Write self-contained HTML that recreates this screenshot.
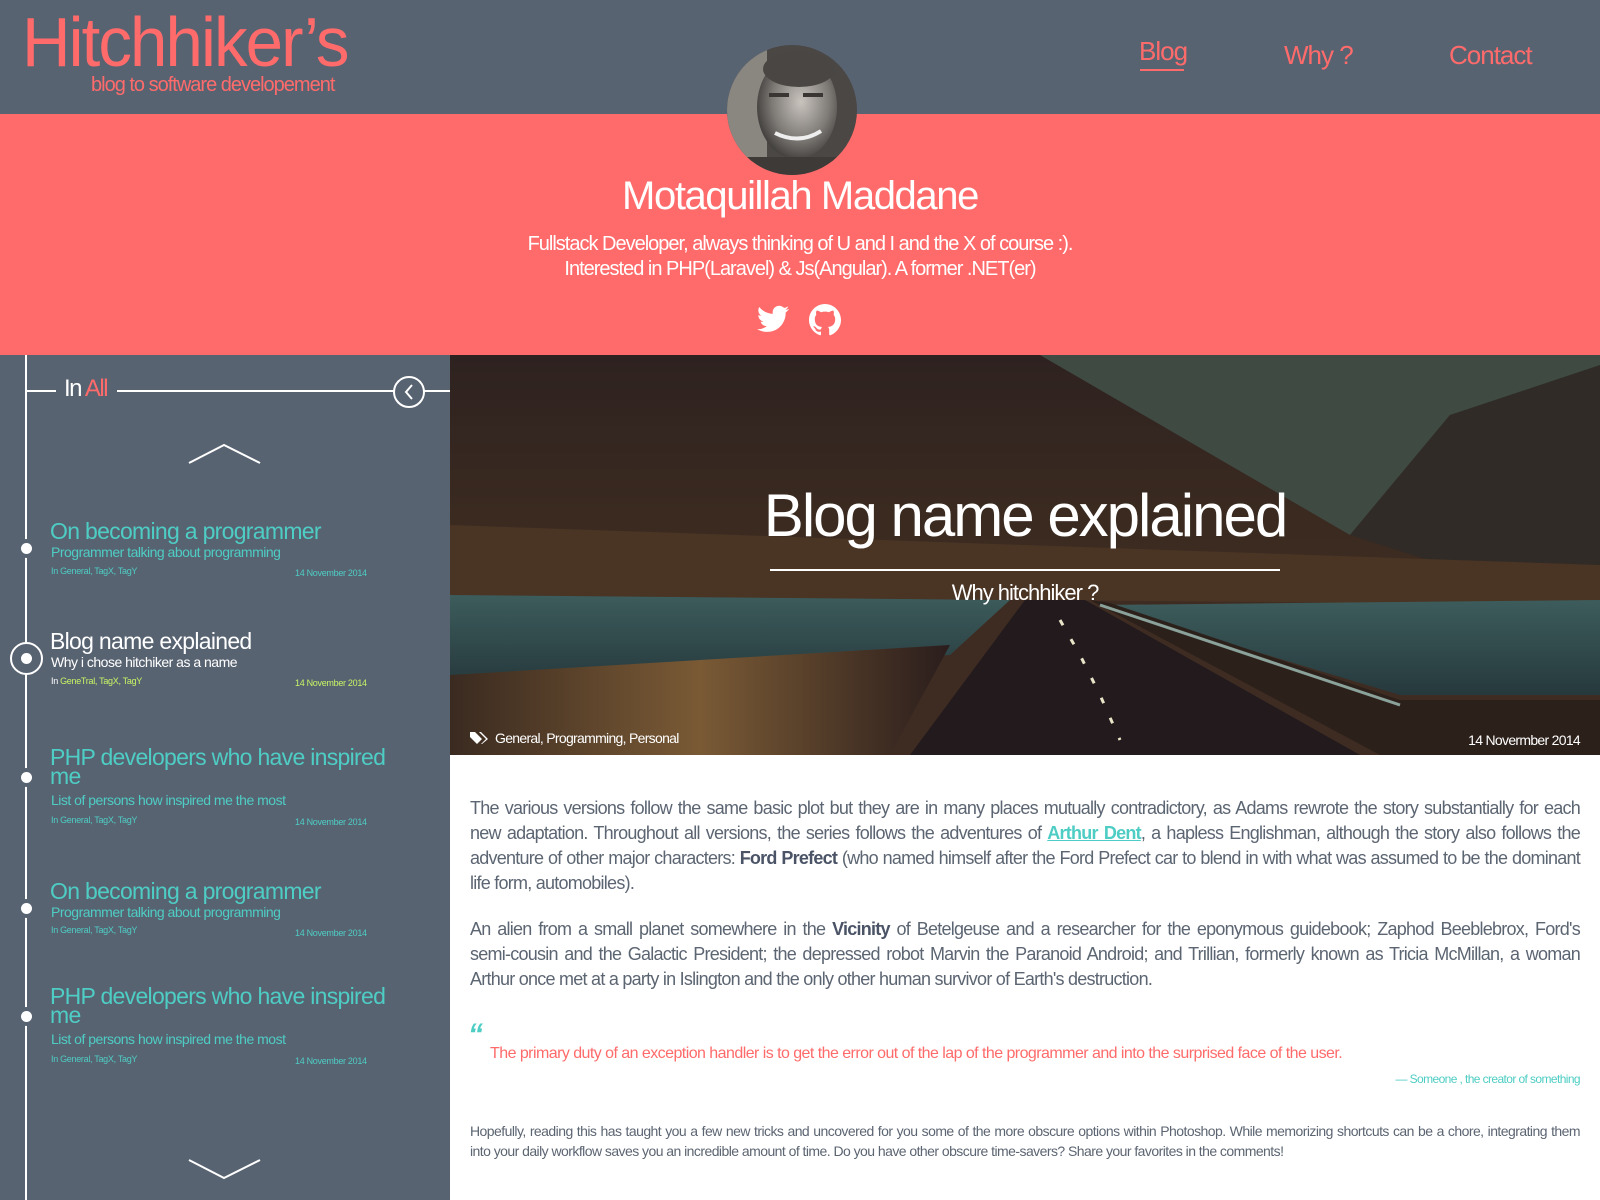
<!DOCTYPE html>
<html><head><meta charset="utf-8"><style>
*{margin:0;padding:0;box-sizing:border-box}
body{width:1600px;height:1200px;overflow:hidden;background:#fff;font-family:"Liberation Sans",sans-serif;position:relative}
.abs{position:absolute;white-space:nowrap}
#top{position:absolute;left:0;top:0;width:1600px;height:114px;background:#586372}
#pink{position:absolute;left:0;top:114px;width:1600px;height:241px;background:#ff6b6b}
#side{position:absolute;left:0;top:355px;width:450px;height:845px;background:#586372}
#hero{position:absolute;left:450px;top:355px;width:1150px;height:400px;overflow:hidden}
.teal{color:#4ecdc4}
.t{font-size:23px;letter-spacing:-0.7px;line-height:26px}
.s{font-size:14px;letter-spacing:-0.5px}
.m{font-size:9px;letter-spacing:-0.3px}
.dot{position:absolute;left:21px;width:11px;height:11px;border-radius:50%;background:#fff;box-shadow:0 0 0 4px #586372}
.body{position:absolute;left:470px;width:1110px;color:#5c6572;font-size:18px;letter-spacing:-0.75px}
.body div{text-align:justify;text-align-last:justify;height:25px;line-height:25px;white-space:nowrap}
.body div.l{text-align-last:left}
b{color:#4a5466}
</style></head><body>
<div id="top"></div>
<div id="pink"></div>
<div class="abs" style="left:22px;top:2px;font-size:70px;color:#ff6b6b;letter-spacing:-2px;transform:scaleX(0.96);transform-origin:left">Hitchhiker’s</div>
<div class="abs" style="left:91px;top:74px;font-size:20px;color:#ff6b6b;letter-spacing:-1px">blog to software developement</div>
<div class="abs" style="left:1139px;top:36px;font-size:26px;color:#ff6b6b;letter-spacing:-1px">Blog</div>
<div class="abs" style="left:1140px;top:69px;width:44px;height:2px;background:#ff6b6b"></div>
<div class="abs" style="left:1284px;top:40px;font-size:26px;color:#ff6b6b;letter-spacing:-1px">Why ?</div>
<div class="abs" style="left:1449px;top:40px;font-size:26px;color:#ff6b6b;letter-spacing:-1px">Contact</div>
<svg class="abs" style="left:727px;top:45px" width="130" height="130" viewBox="0 0 130 130">
<defs><clipPath id="c"><circle cx="65" cy="65" r="65"/></clipPath><radialGradient id="g" cx="0.55" cy="0.45" r="0.6"><stop offset="0" stop-color="#c9c4be"/><stop offset="0.6" stop-color="#7e7a76"/><stop offset="1" stop-color="#3a3836"/></radialGradient></defs>
<g clip-path="url(#c)"><rect width="130" height="130" fill="#4a4744"/><rect width="40" height="130" fill="#8a8680"/>
<ellipse cx="70" cy="62" rx="40" ry="52" fill="url(#g)"/><ellipse cx="72" cy="24" rx="36" ry="18" fill="#4a4643"/>
<rect x="42" y="48" width="20" height="4" fill="#3a3634"/><rect x="76" y="48" width="20" height="4" fill="#3a3634"/>
<path d="M48 88 Q72 100 94 86" stroke="#eee" stroke-width="4" fill="none"/>
<rect x="0" y="112" width="130" height="20" fill="#3d3a37"/></g></svg>
<div class="abs" style="left:0;width:1600px;text-align:center;top:174px;font-size:40px;color:#fff;letter-spacing:-1.4px">Motaquillah Maddane</div>
<div class="abs" style="left:0;width:1600px;text-align:center;top:232px;font-size:20px;color:#fff;letter-spacing:-1px;line-height:25px">Fullstack Developer, always thinking of U and I and the X of course :).<br>Interested in PHP(Laravel) &amp; Js(Angular). A former .NET(er)</div>
<svg class="abs" style="left:757px;top:305px" width="32" height="28" viewBox="0 0 24 20"><path fill="#fff" d="M24 2.4c-.9.4-1.8.7-2.8.8 1-.6 1.8-1.6 2.2-2.7-1 .6-2 1-3.1 1.2A4.9 4.9 0 0 0 11.9 6.2 14 14 0 0 1 1.7 1 4.9 4.9 0 0 0 3.2 7.6 4.9 4.9 0 0 1 1 7v.1c0 2.4 1.7 4.4 3.9 4.8-.7.2-1.5.2-2.200.1.6 2 2.4 3.4 4.6 3.4A9.9 9.9 0 0 1 0 17.5 14 14 0 0 0 7.5 19.7c9.1 0 14-7.5 14-14v-.6c1-.7 1.8-1.6 2.5-2.6z"/></svg>
<svg class="abs" style="left:809px;top:304px" width="32" height="32" viewBox="0 0 16 16"><path fill="#fff" d="M8 0C3.6 0 0 3.6 0 8c0 3.5 2.3 6.5 5.5 7.6.4.1.5-.2.5-.4v-1.4c-2.2.5-2.7-1-2.7-1-.4-.9-.9-1.2-.9-1.2-.7-.5.1-.5.1-.5.8.1 1.2.8 1.2.8.7 1.2 1.9.9 2.3.7.1-.5.3-.9.5-1.1-1.8-.2-3.6-.9-3.6-4 0-.9.3-1.6.8-2.1-.1-.2-.4-1 .1-2.1 0 0 .7-.2 2.2.8.6-.2 1.3-.3 2-.3s1.4.1 2 .3c1.5-1 2.2-.8 2.2-.8.4 1.1.2 1.9.1 2.1.5.6.8 1.3.8 2.1 0 3.1-1.9 3.8-3.6 4 .3.3.6.8.6 1.5v2.2c0 .2.1.5.6.4C13.7 14.5 16 11.5 16 8c0-4.4-3.6-8-8-8z"/></svg>

<div id="side">
<div class="abs" style="left:25px;top:0;width:2px;height:845px;background:#fff"></div>
<div class="abs" style="left:26px;top:35px;width:30px;height:2px;background:#fff"></div>
<div class="abs" style="left:117px;top:35px;width:278px;height:2px;background:#fff"></div>
<div class="abs" style="left:424px;top:35px;width:26px;height:2px;background:#fff"></div>
<div class="abs" style="left:393px;top:21px;width:32px;height:32px;border:2px solid #fff;border-radius:50%"></div>
<svg class="abs" style="left:403px;top:28px" width="12" height="18"><path d="M9 2 L3 9 L9 16" stroke="#fff" stroke-width="2" fill="none"/></svg>
<div class="abs" style="left:64px;top:20px;font-size:24px;color:#fff;letter-spacing:-1.5px">In <span style="color:#ff6b6b">All</span></div>
<svg class="abs" style="left:188px;top:88px" width="74" height="22"><path d="M1 20 L36 2 L72 20" stroke="#fff" stroke-width="2" fill="none"/></svg>
<svg class="abs" style="left:188px;top:803px" width="74" height="22"><path d="M1 2 L36 20 L72 2" stroke="#fff" stroke-width="2" fill="none"/></svg>

<div class="dot" style="top:188px"></div>
<div class="abs teal t" style="left:50px;top:163px">On becoming a programmer</div>
<div class="abs teal s" style="left:51px;top:189px">Programmer talking about programming</div>
<div class="abs teal m" style="left:51px;top:211px">In General, TagX, TagY</div>
<div class="abs teal m" style="left:295px;top:213px">14 November 2014</div>

<div class="abs" style="left:10px;top:287px;width:33px;height:33px;border:2px solid #fff;border-radius:50%;background:#586372"></div>
<div class="abs" style="left:21px;top:298px;width:11px;height:11px;border-radius:50%;background:#fff"></div>
<div class="abs t" style="left:50px;top:273px;color:#fff">Blog name explained</div>
<div class="abs s" style="left:51px;top:299px;color:#fff">Why i chose hitchiker as a name</div>
<div class="abs m" style="left:51px;top:321px;color:#fff">In <span style="color:#c7f464">GeneTral, TagX, TagY</span></div>
<div class="abs m" style="left:295px;top:323px;color:#c7f464">14 November 2014</div>

<div class="dot" style="top:417px"></div>
<div class="abs teal t" style="left:50px;top:393px;line-height:19px">PHP developers who have inspired<br>me</div>
<div class="abs teal s" style="left:51px;top:437px">List of persons how inspired me the most</div>
<div class="abs teal m" style="left:51px;top:460px">In General, TagX, TagY</div>
<div class="abs teal m" style="left:295px;top:462px">14 November 2014</div>

<div class="dot" style="top:548px"></div>
<div class="abs teal t" style="left:50px;top:523px">On becoming a programmer</div>
<div class="abs teal s" style="left:51px;top:549px">Programmer talking about programming</div>
<div class="abs teal m" style="left:51px;top:570px">In General, TagX, TagY</div>
<div class="abs teal m" style="left:295px;top:573px">14 November 2014</div>

<div class="dot" style="top:656px"></div>
<div class="abs teal t" style="left:50px;top:632px;line-height:19px">PHP developers who have inspired<br>me</div>
<div class="abs teal s" style="left:51px;top:676px">List of persons how inspired me the most</div>
<div class="abs teal m" style="left:51px;top:699px">In General, TagX, TagY</div>
<div class="abs teal m" style="left:295px;top:701px">14 November 2014</div>
</div>

<div id="hero">
<svg width="1150" height="400" viewBox="0 0 1150 400" preserveAspectRatio="none">
<defs>
<linearGradient id="sky" x1="0" y1="0" x2="0" y2="1"><stop offset="0" stop-color="#2e2220"/><stop offset="0.4" stop-color="#3a2a20"/><stop offset="0.6" stop-color="#3e2c22"/></linearGradient>
<linearGradient id="w" x1="0" y1="0" x2="0" y2="1"><stop offset="0" stop-color="#3d5c5c"/><stop offset="1" stop-color="#26393d"/></linearGradient>
<linearGradient id="gr" x1="0" y1="0" x2="1" y2="0"><stop offset="0" stop-color="#3a2a20"/><stop offset="0.5" stop-color="#7a5a35"/><stop offset="1" stop-color="#2a1d1c"/></linearGradient>
</defs>
<rect width="1150" height="400" fill="url(#sky)"/>
<path d="M590 0 L1150 0 L1150 120 L1000 60 L900 180 Z" fill="#3f4a42"/>
<path d="M900 180 L1000 60 L1150 10 L1150 260 Z" fill="#302b26"/>
<path d="M0 170 L1150 210 L1150 250 L0 240 Z" fill="#4a3424"/>
<path d="M0 240 L560 245 L500 300 L0 330 Z" fill="url(#w)"/>
<path d="M650 250 L1150 245 L1150 340 L950 340 Z" fill="url(#w)"/>
<path d="M0 320 L500 290 L440 400 L0 400 Z" fill="url(#gr)"/>
<path d="M575 245 L635 245 L910 400 L460 400 Z" fill="#221a1d"/>
<path d="M640 245 L930 400 L1150 400 L1150 345 L950 345 L660 248 Z" fill="#2c201b"/>
<path d="M650 250 L950 350" stroke="#8aa29a" stroke-width="3"/>
<path d="M610 265 L630 300 L650 340 L670 385" stroke="#e8e4c8" stroke-width="3" stroke-dasharray="6 16" fill="none"/>
</svg>
<div class="abs" style="left:0;width:1150px;text-align:center;top:126px;font-size:60px;color:#fff;letter-spacing:-2px">Blog name explained</div>
<div class="abs" style="left:320px;top:214px;width:510px;height:2px;background:#fff"></div>
<div class="abs" style="left:0;width:1150px;text-align:center;top:225px;font-size:22px;color:#fff;letter-spacing:-1px">Why hitchhiker ?</div>
<svg class="abs" style="left:20px;top:376px" width="18" height="14" viewBox="0 0 18 14"><path fill="#fff" d="M0 1 L0 6 L7 13 L12 8 L5 1 Z M9 1 L16 8 L11 13 L12 13 L18 8 L11 1 Z"/></svg>
<div class="abs" style="left:45px;top:375px;font-size:14px;color:#fff;letter-spacing:-0.7px">General, Programming, Personal</div>
<div class="abs" style="right:20px;top:377px;font-size:14px;color:#fff;letter-spacing:-0.7px">14 Novermber 2014</div>
</div>

<div class="body" style="top:796px">
<div>The various versions follow the same basic plot but they are in many places mutually contradictory, as Adams rewrote the story substantially for each</div>
<div>new adaptation. Throughout all versions, the series follows the adventures of <a style="color:#4ecdc4;font-weight:bold;text-decoration:underline">Arthur Dent</a>, a hapless Englishman, although the story also follows the</div>
<div>adventure of other major characters: <b>Ford Prefect</b> (who named himself after the Ford Prefect car to blend in with what was assumed to be the dominant</div>
<div class="l">life form, automobiles).</div>
</div>
<div class="body" style="top:917px">
<div>An alien from a small planet somewhere in the <b>Vicinity</b> of Betelgeuse and a researcher for the eponymous guidebook; Zaphod Beeblebrox, Ford's</div>
<div>semi-cousin and the Galactic President; the depressed robot Marvin the Paranoid Android; and Trillian, formerly known as Tricia McMillan, a woman</div>
<div class="l">Arthur once met at a party in Islington and the only other human survivor of Earth's destruction.</div>
</div>
<div class="abs" style="left:468px;top:1018px;font-size:30px;color:#4ecdc4;font-style:italic;font-weight:bold">“</div>
<div class="abs" style="left:490px;top:1045px;font-size:16px;color:#ff6b6b;letter-spacing:-0.55px">The primary duty of an exception handler is to get the error out of the lap of the programmer and into the surprised face of the user.</div>
<div class="abs" style="right:20px;top:1072px;font-size:12px;color:#4ecdc4;letter-spacing:-0.6px">— Someone , the creator of something</div>
<div class="body" style="top:1121px;font-size:14px;letter-spacing:-0.55px">
<div style="height:20px;line-height:20px">Hopefully, reading this has taught you a few new tricks and uncovered for you some of the more obscure options within Photoshop. While memorizing shortcuts can be a chore, integrating them</div>
<div class="l" style="height:20px;line-height:20px">into your daily workflow saves you an incredible amount of time. Do you have other obscure time-savers? Share your favorites in the comments!</div>
</div>
</body></html>
